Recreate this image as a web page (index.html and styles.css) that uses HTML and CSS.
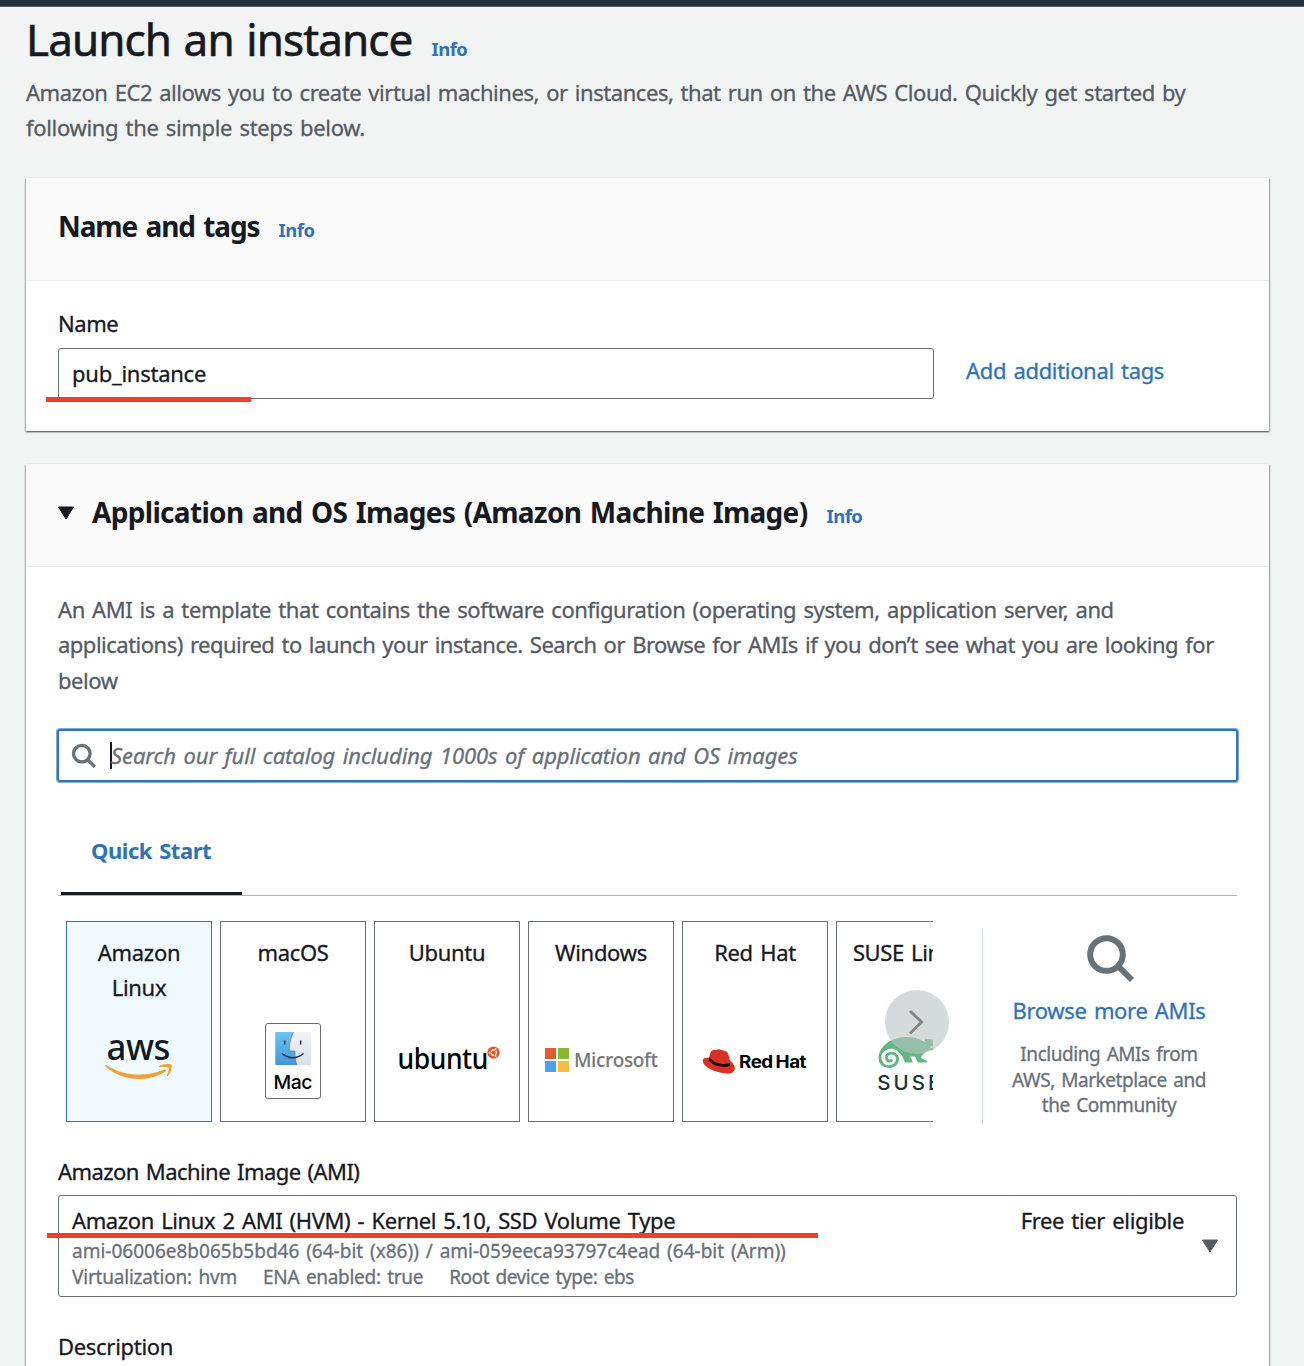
FILE: index.html
```html
<!DOCTYPE html>
<html lang="en">
<head>
<meta charset="utf-8">
<title>Launch an instance</title>
<link rel="stylesheet" href="styles.css">
</head>
<body>
<div class="topbar"></div>
<main class="page">
  <header class="page-header">
    <div class="title-row"><h1>Launch an instance</h1><a class="info">Info</a></div>
    <p class="intro"><span class="l1">Amazon EC2 allows you to create virtual machines, or instances, that run on the AWS Cloud. Quickly get started by</span><br><span class="l2">following the simple steps below.</span></p>
  </header>

  <section class="card name-card">
    <div class="card-head"><h2 class="h-name">Name and tags</h2><a class="info">Info</a></div>
    <div class="card-body">
      <div class="label">Name</div>
      <div class="name-row">
        <div class="input"><span class="value">pub_instance</span><i class="mark mark-name"></i></div>
        <a class="link add-tags">Add additional tags</a>
      </div>
    </div>
  </section>

  <section class="card ami-card">
    <div class="card-head">
      <svg class="caret" width="18" height="14" viewBox="0 0 18 14"><path d="M1.500 1h15L9 13z" fill="#16191f" stroke="#16191f" stroke-linejoin="round"/></svg>
      <h2 class="h-ami">Application and OS Images (Amazon Machine Image)</h2><a class="info">Info</a>
    </div>
    <div class="card-body">
      <p class="about"><span class="a1">An AMI is a template that contains the software configuration (operating system, application server, and</span><br><span class="a2">applications) required to launch your instance. Search or Browse for AMIs if you don’t see what you are looking for</span><br><span class="a3">below</span></p>
      <div class="search">
        <svg width="26" height="26" viewBox="0 0 26 26"><g fill="none" stroke="#687078" stroke-width="3.300"><circle cx="10.800" cy="11.600" r="8.300"/><path d="M16.800 17.800l7 7"/></g></svg>
        <span class="cursor"></span><span class="placeholder">Search our full catalog including 1000s of application and OS images</span>
      </div>
      <div class="tabs"><span class="tab"><b>Quick Start</b></span></div>

      <div class="catalog">
        <div class="slider">
          <div class="tiles">
            <div class="tile selected"><span class="tile-name">Amazon Linux</span>
              <svg width="144" height="90" viewBox="67 1020 144 90">
                <text x="106.500" y="1059.500" font-family="Noto Sans, sans-serif" font-size="37" font-weight="500" fill="#16191f" textLength="63.500" lengthAdjust="spacingAndGlyphs">aws</text>
                <path d="M105.300 1066.200C104.800 1065 106 1064.600 107 1065.400C125 1076.500 146 1077 164.500 1069.500C166.300 1069 167 1070.300 165.500 1071.400C148 1083 121 1081 105.300 1066.200Z" fill="#f29f37"/>
                <path d="M158.700 1066.500C162 1063.800 170.500 1063.500 171.600 1064.900C172.500 1067 170.500 1073.500 167.600 1075.900C166.900 1076.300 166.700 1075.600 167 1075C168 1072.500 169.500 1068.800 168.800 1067.800C168 1066.700 163 1066.800 159.500 1067.200Z" fill="#f29f37"/>
              </svg></div>
            <div class="tile"><span class="tile-name">macOS</span>
              <svg width="144" height="90" viewBox="221 1020 144 90">
                <defs><linearGradient id="sky" x2="0" y2="1"><stop stop-color="#6ac4f2"/><stop offset="1" stop-color="#4297dc"/></linearGradient><linearGradient id="pale" x2="0" y2="1"><stop stop-color="#f1f2f6"/><stop offset="1" stop-color="#d9dfe7"/></linearGradient></defs>
                <rect x="265.500" y="1023.500" width="55" height="75" rx="2.500" fill="#fff" stroke="#6b6b6b"/>
                <rect x="275.300" y="1032" width="35.700" height="33" rx="1" fill="url(#pale)"/>
                <path d="M276.300 1032H293.500C290.500 1038 289.300 1044 289.300 1051H295C294.800 1056 295.500 1061 296.700 1065H276.300a1 1 0 0 1-1-1V1033a1 1 0 0 1 1-1Z" fill="url(#sky)"/>
                <path d="M284.700 1041v3M300.700 1041v3" stroke="#26384b" stroke-width="1.500" stroke-linecap="round"/>
                <path d="M293.500 1032C290.500 1038 289.300 1044 289.300 1051H295C294.800 1056 295.500 1061 296.700 1065" fill="none" stroke="#5d6f80" stroke-width=".6"/>
                <path d="M282 1053.500Q292.700 1062 303.700 1053.500" fill="none" stroke="#1d2b3a" stroke-width="1.400"/>
                <text x="273.500" y="1089" font-family="Inter, sans-serif" font-size="19" font-weight="500" textLength="38.500" lengthAdjust="spacingAndGlyphs">Mac</text>
              </svg></div>
            <div class="tile"><span class="tile-name">Ubuntu</span>
              <svg width="144" height="90" viewBox="375 1020 144 90">
                <text x="397.500" y="1068.500" font-family="Noto Sans, sans-serif" font-size="28" font-weight="500" textLength="90.500" lengthAdjust="spacingAndGlyphs">ubuntu</text>
                <circle cx="493.500" cy="1052.600" r="6.200" fill="#df5a2b"/>
                <circle cx="493.700" cy="1052.600" r="2.700" fill="none" stroke="#fff" stroke-width="1.200" stroke-dasharray="4.650 1" stroke-dashoffset="2.300"/>
                <g fill="#fff"><circle cx="489.600" cy="1052.600" r=".9"/><circle cx="495.600" cy="1049" r=".9"/><circle cx="495.600" cy="1056.200" r=".9"/></g>
              </svg></div>
            <div class="tile"><span class="tile-name">Windows</span>
              <svg width="144" height="90" viewBox="529 1020 144 90">
                <path d="M545 1048h11v11h-11z" fill="#e35b31"/><path d="M558 1048h11v11h-11z" fill="#8cb733"/><path d="M545 1061h11v11h-11z" fill="#4aa1ec"/><path d="M558 1061h11v11h-11z" fill="#f5bb42"/>
                <text x="574" y="1067" font-family="Open Sans, sans-serif" font-size="20" font-weight="600" fill="#7a7a7a" textLength="83.500" lengthAdjust="spacingAndGlyphs">Microsoft</text>
              </svg></div>
            <div class="tile"><span class="tile-name">Red Hat</span>
              <svg width="144" height="90" viewBox="683 1020 144 90">
                <path d="M709.500 1056C710 1053 711 1051 712.500 1050.300C714 1049.700 715.500 1050 716.500 1050C718 1049 719.500 1048.800 721 1050C723.500 1051 726.500 1051 727.500 1052.500C728.800 1055 729.300 1058 730 1061C733.500 1063 735.500 1067 734.800 1069.500C733.500 1074 727 1074.500 720 1072.500C711 1070.500 702.500 1065.500 702.700 1060.500C702.900 1058 705.500 1057.300 709 1057.800Z" fill="#dc3022"/>
                <path d="M709.300 1057.300C714 1063 723 1065.800 730.200 1063L729.600 1066C723 1068.500 711 1065 708.800 1060.200Z" fill="#111"/>
                <text x="739" y="1067.700" font-family="Inter, sans-serif" font-size="17" font-weight="700" textLength="67" lengthAdjust="spacingAndGlyphs" word-spacing="-1">Red Hat</text>
              </svg></div>
            <div class="tile"><span class="tile-name suse">SUSE Linux</span>
              <svg width="144" height="90" viewBox="837 1020 144 90">
                <path d="M878.500 1057C880 1045 892 1037 908 1037C916 1037 921 1040 925.500 1042.500L924.500 1038.500L935 1040L941 1045V1050H932C927 1050 922 1054 921 1058L927 1061V1062.500H918L915 1056.500H910L912.500 1061V1062.500H905C903 1057 901 1053 897 1050.500C891 1047 883 1049 881 1057Z" fill="#60b881"/>
                <path d="M880 1057C879.500 1063 884 1067 889.500 1066.500C896 1066 899.500 1060 896.500 1055.500C893.500 1051.500 886 1053 886.500 1058C887 1061.500 891 1062 892 1059.500" fill="none" stroke="#60b881" stroke-width="2.800"/>
                <circle cx="931.500" cy="1047" r="1.300" fill="#fff"/>
                <text x="877.300" y="1090" font-family="Inter, sans-serif" font-size="20.500" font-weight="500" fill="#17362f" textLength="62.500" lengthAdjust="spacing">SUSE</text>
              </svg></div>
          </div>
          <span class="next"><svg width="64" height="64" viewBox="0 0 64 64"><path d="M25 21l11.500 11L25 43.500" fill="none" stroke="#848889" stroke-width="3"/></svg></span>
        </div>
        <div class="browse">
          <svg width="48" height="48" viewBox="0 0 48 48"><g fill="none" stroke="#687078" stroke-width="6"><circle cx="19.500" cy="19.500" r="16.300"/><path d="M31 31l14 14"/></g></svg>
          <a class="link browse-link">Browse more AMIs</a>
          <p class="small"><span class="s1">Including AMIs from</span><br><span class="s2">AWS, Marketplace and</span><br><span class="s3">the Community</span></p>
        </div>
      </div>

      <div class="label ami-label">Amazon Machine Image (AMI)</div>
      <div class="select">
        <div class="option">
          <div class="option-title"><span class="ot">Amazon Linux 2 AMI (HVM) - Kernel 5.10, SSD Volume Type</span><span class="free">Free tier eligible</span></div>
          <div class="option-meta"><span class="ids">ami-06006e8b065b5bd46 (64-bit (x86)) / ami-059eeca93797c4ead (64-bit (Arm))</span></div>
          <div class="option-meta tags"><span class="m1">Virtualization: hvm</span><span class="m2">ENA enabled: true</span><span class="m3">Root device type: ebs</span></div>
        </div>
        <svg class="drop" width="18" height="14" viewBox="0 0 18 14"><path d="M1.500 1h15L9 13z" fill="#545b64" stroke="#545b64" stroke-linejoin="round"/></svg>
        <i class="mark mark-ami"></i>
      </div>
      <div class="label desc">Description</div>
    </div>
  </section>
</main>
</body>
</html>
```
FILE: styles.css
```css
* { box-sizing: border-box; }
html, body { margin: 0; height: 1366px; overflow: hidden; }
body { background: #f2f4f3; color: #16191f; font: 400 22px/35.2px "Noto Sans", sans-serif; letter-spacing: -0.45px; word-spacing: 1.9px; white-space: nowrap; -webkit-text-stroke: .3px; }
svg, h2, .info, b { -webkit-text-stroke: 0; }
h1, h2, p { margin: 0; }
.topbar { height: 7px; background: #262f3e; border-bottom: 1px solid #596069; }
.page { padding: 0 35px 0 26px; }
.page-header { padding-top: 4px; height: 171px; }
.title-row { display: flex; align-items: baseline; gap: 19px; height: 64px; }
h1 { font-size: 44px; line-height: 56px; font-weight: 400; letter-spacing: -.88px; -webkit-text-stroke: .6px; }
.info { color: #2e73b8; font-size: 18.500px; font-weight: 700; letter-spacing: -.5px; }
.intro { color: #545b64; }
.l2 { letter-spacing: -.33px; }
.card { background: #fff; box-shadow: 0 1px 2px rgba(0, 20, 30, .5), 1px 1px 1px rgba(0, 28, 36, .22), -1px 1px 1px rgba(0, 28, 36, .15); }
.name-card { height: 253px; margin-bottom: 33px; }
.ami-card { height: 960px; }
.card-head { display: flex; align-items: baseline; gap: 19px; height: 103px; padding: 28px 32px 0; background: #fafafa; border-bottom: 1px solid #eaeded; }
h2 { font-size: 28px; line-height: 40px; font-weight: 700; }
.h-name { letter-spacing: -1.1px; word-spacing: 2.2px; }
.h-ami { letter-spacing: -.68px; }
.card-body { padding: 0 32px; }
.name-card .card-body { padding-top: 25px; }
.name-row { display: flex; gap: 32px; margin-top: 7px; }
.input { position: relative; width: 876px; height: 51px; border: 1px solid #687078; border-radius: 3px; padding: 7px 13px; letter-spacing: -.25px; }
.mark { position: absolute; background: #ee4027; }
.mark-name { left: -13px; top: 48px; width: 205px; height: 5px; }
.link { color: #2e73b8; letter-spacing: -.33px; }
.add-tags { padding-top: 5px; }
.caret { margin-right: -2px; margin-left: -1px; align-self: flex-start; margin-top: 14px; }
.about { padding-top: 25px; color: #545b64; line-height: 35.330px; }
.a1 { letter-spacing: -.4px; }
.a2 { letter-spacing: -.5px; }
.search { display: flex; align-items: center; width: 1181px; height: 53px; margin: 31px 0 0 -1px; padding-left: 12px; border: 2px solid #2e73b8; border-radius: 3px; box-shadow: 0 0 0 1px rgba(46, 115, 184, .6); }
.cursor { width: 2px; height: 27px; margin-left: 13px; background: #16191f; }
.placeholder { margin-left: -1px; color: #687078; font-style: italic; letter-spacing: -.1px; }
.tabs { height: 114px; border-bottom: 1px solid #aab7b8; width: 1179px; padding: 51px 0 0 3px; }
.tab { display: block; width: 181px; height: 62px; padding-left: 30px; color: #2e73b8; border-bottom: 3px solid #16191f; }
.catalog { display: flex; height: 228px; padding-top: 25px; }
.slider { position: relative; width: 875px; height: 201px; }
.tiles { display: flex; gap: 8px; padding-left: 8px; overflow: hidden; height: 201px; }
.tile { flex: 0 0 146px; height: 201px; border: 1px solid #687078; padding-top: 13px; text-align: center; white-space: normal; }
.tile-name { display: block; height: 85px; padding: 0 14px; letter-spacing: -.3px; }
.tile svg { display: block; }
.tile.selected { background: #f1faff; border-color: #2e73b8; }
.suse { white-space: nowrap; letter-spacing: -.4px; }
.next { position: absolute; left: 827px; top: 69px; width: 64px; height: 64px; border-radius: 50%; background: rgba(185, 195, 195, .6); }
.browse { display: flex; flex-direction: column; align-items: center; width: 253px; height: 195px; margin: 8px 0 0 49px; padding-top: 6px; border-left: 1px solid #d5dbdb; }
.browse svg { margin-left: 4px; }
.browse-link { margin-top: 10px; }
.small { margin-top: 14px; color: #687078; font-size: 19px; line-height: 25.500px; text-align: center; }
.ami-label { margin-top: 30px; letter-spacing: -.57px; }
.select { position: relative; display: flex; width: 1179px; height: 102px; margin-top: 6px; padding: 7px 17px 0 13px; border: 1px solid #687078; border-radius: 3px; }
.option { width: 1112px; }
.option-title { display: flex; justify-content: space-between; height: 35px; }
.ot { letter-spacing: -.38px; }
.free { letter-spacing: -.36px; }
.option-meta { color: #687078; font-size: 19px; line-height: 26px; }
.ids { letter-spacing: 0; }
.tags { display: flex; gap: 26px; letter-spacing: -.3px; }
.m1 { letter-spacing: -.2px; }
.m3 { letter-spacing: -.45px; }
.drop { margin: 36px 0 0 17px; flex: none; }
.mark-ami { left: -12px; top: 37px; width: 771px; height: 5px; }
.desc { margin-top: 32px; letter-spacing: -.3px; }
```
